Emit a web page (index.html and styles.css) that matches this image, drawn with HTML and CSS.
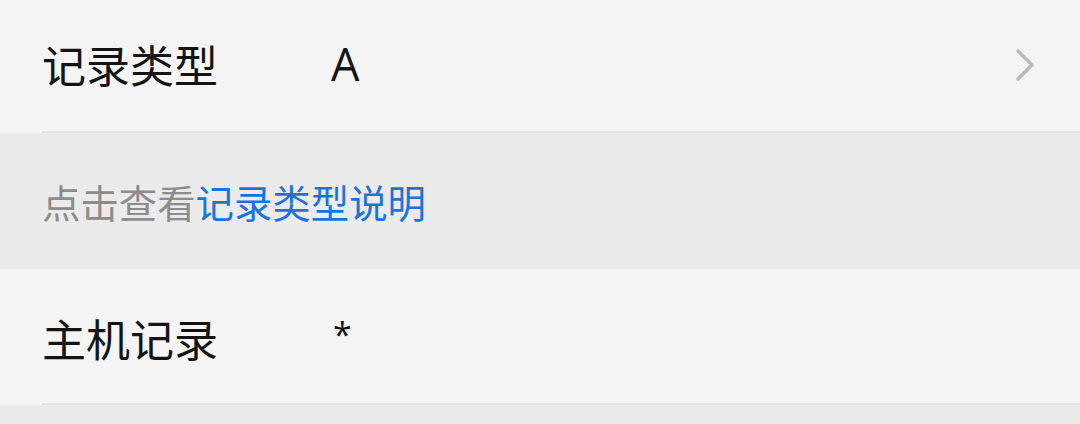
FILE: index.html
```html
<!DOCTYPE html>
<html lang="zh-CN">
<head>
<meta charset="utf-8">
<link rel="stylesheet" href="styles.css">
</head>
<body>
<div class="page">
  <div class="cell">
    <div class="row first">
      <div class="label">记录类型</div>
      <div class="value">A</div>
      <svg class="chev" width="20" height="34" viewBox="0 0 20 34"><path d="M3 3 L17 17 L3 31" fill="none" stroke="#b8b8b8" stroke-width="3.2" stroke-linecap="round" stroke-linejoin="round"/></svg>
    </div>
  </div>
  <div class="tip">点击查看<span class="link">记录类型说明</span></div>
  <div class="cell">
    <div class="row second">
      <div class="label">主机记录</div>
      <div class="value star">*</div>
    </div>
  </div>
</div>
</body>
</html>
```
FILE: styles.css
```css
html, body {
  margin: 0;
  padding: 0;
  background: #ebebeb;
}
.page {
  width: 1080px;
  font-family: "Noto Sans CJK SC", "Noto Sans", sans-serif;
}
.cell {
  background: #f5f5f5;
}
.row {
  margin-left: 42px;
  height: 131px;
  border-bottom: 2px solid #e2e2e2;
  display: flex;
  align-items: center;
  padding-right: 45px;
}
.row.second {
  height: 134px;
}
.label {
  width: 289px;
  font-size: 44px;
  color: #141414;
  line-height: 1;
  margin-top: -4px;
}
.row.second .label {
  margin-top: 4px;
}
.value {
  flex: 1;
  font-size: 45px;
  font-family: "Open Sans", "Noto Sans", sans-serif;
  color: #141414;
  line-height: 1;
  margin-top: -4px;
}
.value.star {
  font-size: 34px;
  padding-left: 2px;
  margin-top: -4px;
}
.chev {
  display: block;
  margin-top: -1px;
}
.tip {
  height: 136px;
  display: flex;
  align-items: center;
  padding-left: 42px;
  font-size: 38.4px;
  color: #8c8c8c;
  line-height: 1;
}
.link {
  color: #1a73e0;
}
```
